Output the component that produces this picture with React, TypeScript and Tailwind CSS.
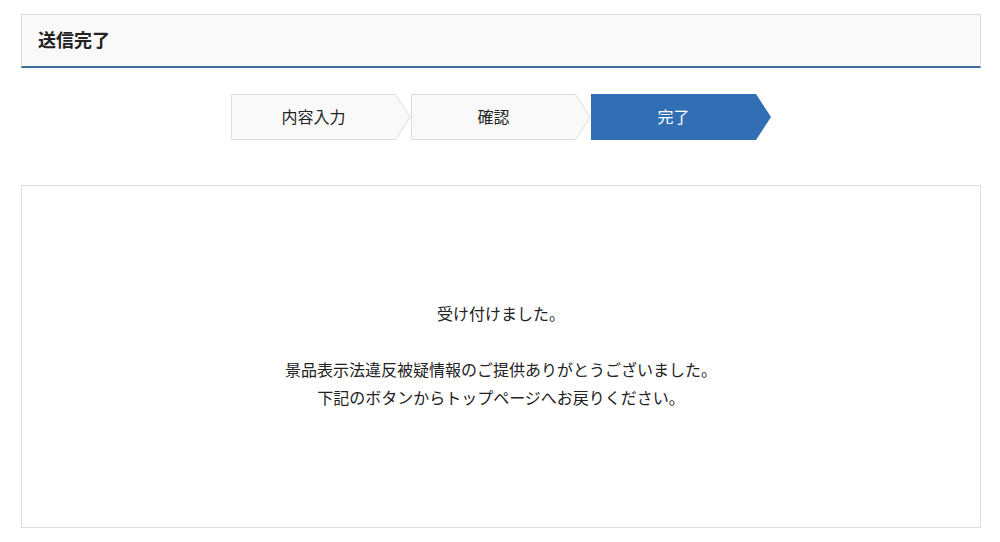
const steps = [
  { label: "内容入力", active: false },
  { label: "確認", active: false },
  { label: "完了", active: true },
];

function Step({ label, active }: { label: string; active: boolean }) {
  return (
    <div className="relative w-[180px] h-[46px]">
      <svg className="absolute inset-0" width="180" height="46" viewBox="0 0 180 46">
        {active ? (
          <path d="M0 0 H165 L180 23 L165 46 H0 Z" fill="#326eb3" />
        ) : (
          <path d="M0.5 0.5 H164.5 L179.4 23 L164.5 45.5 H0.5 Z" fill="#f9f9f9" stroke="#dddddd" strokeWidth="1" />
        )}
      </svg>
      <div
        className={`relative flex h-full w-[165px] items-center justify-center pb-[2px] text-[16px] ${
          active ? "text-white" : "text-[#222]"
        }`}
      >
        {label}
      </div>
    </div>
  );
}

export default function App() {
  return (
    <div
      className="min-h-[542px] bg-white pl-[21px] pr-[19px] pt-[14px] pb-[14px] text-[#222]"
      style={{ fontFamily: '"Noto Sans CJK JP", "Noto Sans", sans-serif' }}
    >
      <div className="flex h-[54px] items-center border border-b-2 border-[#dddddd] border-b-[#3f6f9c] bg-[#f9f9f9] px-4 pb-[2px]">
        <h1 className="text-[18px] font-bold text-[#222]">送信完了</h1>
      </div>

      <div className="mt-[26px] flex justify-center">
        <div className="flex">
          {steps.map((s) => (
            <Step key={s.label} label={s.label} active={s.active} />
          ))}
        </div>
      </div>

      <div className="mt-[45px] flex h-[343px] flex-col items-center justify-center border border-[#dddddd] pb-[4px] text-center text-[16px] leading-[28px]">
        <p>受け付けました。</p>
        <p className="mt-[28px]">景品表示法違反被疑情報のご提供ありがとうございました。</p>
        <p>下記のボタンからトップページへお戻りください。</p>
      </div>
    </div>
  );
}
